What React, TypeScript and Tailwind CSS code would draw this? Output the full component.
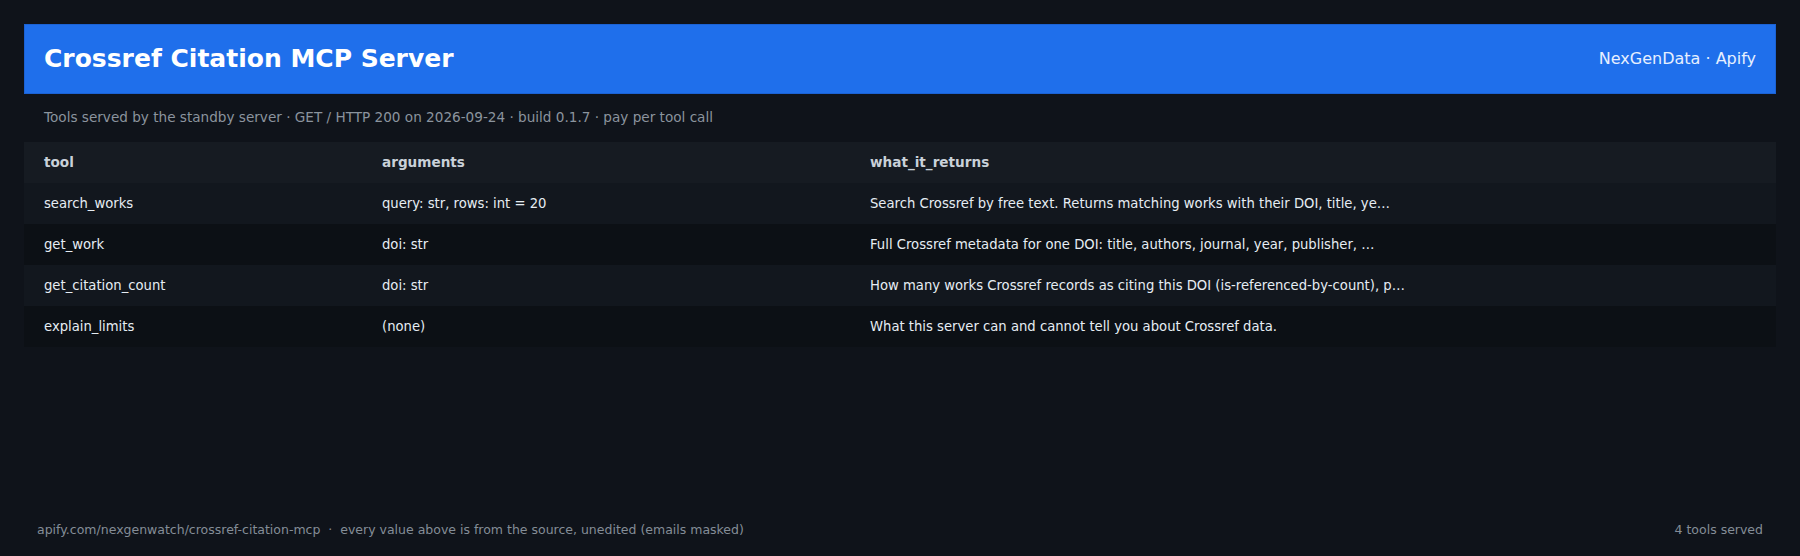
import React from "react";

const tools = [
  {
    name: "search_works",
    args: "query: str, rows: int = 20",
    returns:
      "Search Crossref by free text. Returns matching works with their DOI, title, ye…",
  },
  {
    name: "get_work",
    args: "doi: str",
    returns:
      "Full Crossref metadata for one DOI: title, authors, journal, year, publisher, …",
  },
  {
    name: "get_citation_count",
    args: "doi: str",
    returns:
      "How many works Crossref records as citing this DOI (is-referenced-by-count), p…",
  },
  {
    name: "explain_limits",
    args: "(none)",
    returns: "What this server can and cannot tell you about Crossref data.",
  },
];

export default function App() {
  return (
    <div className="h-[556px] w-full bg-[#0f131a] flex flex-col px-6 pt-6 font-['DejaVu_Sans',sans-serif]">
      <header className="h-[70px] bg-[#1f6feb] border border-[#1b62d4] flex items-center justify-between px-[19px]">
        <h1 className="text-[25px] font-bold text-white">Crossref Citation MCP Server</h1>
        <span className="text-[16px] text-[#e6efff]">NexGenData · Apify</span>
      </header>

      <p className="mt-[14px] px-5 text-[13.6px] leading-[18px] text-[#8b949e]">
        Tools served by the standby server · GET / HTTP 200 on 2026-09-24 · build 0.1.7 · pay per tool call
      </p>

      <div className="mt-4">
        <div className="grid grid-cols-[338px_488px_1fr] h-[41px] items-center bg-[#161b22] text-[13.6px] font-bold text-[#c9d1d9]">
          <div className="px-5">tool</div>
          <div className="px-5">arguments</div>
          <div className="px-5">what_it_returns</div>
        </div>
        {tools.map((t, i) => (
          <div
            key={t.name}
            className={
              "grid grid-cols-[338px_488px_1fr] h-[41px] items-center text-[13.2px] text-[#e6edf3] " +
              (i % 2 === 0 ? "bg-[#12171e]" : "bg-[#0c1015]")
            }
          >
            <div className="px-5">{t.name}</div>
            <div className="px-5">{t.args}</div>
            <div className="px-5">{t.returns}</div>
          </div>
        ))}
      </div>

      <footer className="mt-auto pb-[18px] px-[13px] flex items-center justify-between text-[12.5px] leading-4 text-[#848d97]">
        <span className="whitespace-pre">
          apify.com/nexgenwatch/crossref-citation-mcp  ·  every value above is from the source, unedited (emails masked)
        </span>
        <span>4 tools served</span>
      </footer>
    </div>
  );
}
